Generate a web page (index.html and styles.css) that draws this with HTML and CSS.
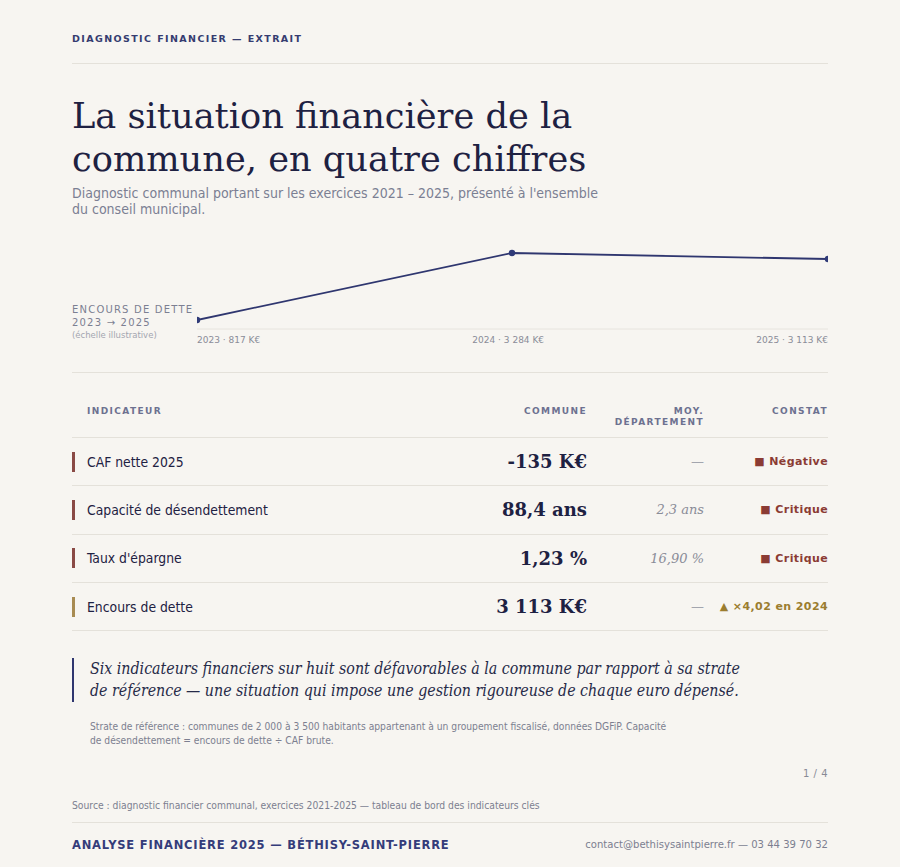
FILE: index.html
```html
<!DOCTYPE html>
<html lang="fr">
<head>
<meta charset="utf-8">
<title>Diagnostic financier</title>
<link rel="stylesheet" href="styles.css">
</head>
<body>
<div class="page">
  <header class="eyebrow">DIAGNOSTIC FINANCIER — EXTRAIT</header>
  <hr class="rule">
  <h1 class="title">La situation financière de la commune, en quatre chiffres</h1>
  <p class="subtitle">Diagnostic communal portant sur les exercices 2021 – 2025, présenté à l'ensemble du conseil municipal.</p>

  <section class="chart">
    <div class="chart-label">
      <div class="chart-name">ENCOURS DE DETTE<br>2023 → 2025</div>
      <div class="chart-note">(échelle illustrative)</div>
    </div>
    <div class="chart-plot">
      <svg class="chart-svg" viewBox="0 0 631 88" width="631" height="88">
        <line x1="0" y1="85" x2="631" y2="85" stroke="#e7e4de" stroke-width="1"/>
        <polyline points="0,76 315,9 631,15" fill="none" stroke="#2f366f" stroke-width="1.8"/>
        <circle cx="0" cy="76" r="3.2" fill="#2f3a78"/>
        <circle cx="315" cy="9" r="3.2" fill="#2f3a78"/>
        <circle cx="631" cy="15" r="3.2" fill="#2f3a78"/>
      </svg>
      <div class="chart-ticks">
        <span>2023 · 817 K€</span>
        <span>2024 · 3 284 K€</span>
        <span>2025 · 3 113 K€</span>
      </div>
    </div>
  </section>

  <hr class="rule rule-chart">

  <div class="table">
    <div class="row head">
      <div class="h-ind">INDICATEUR</div>
      <div class="c-com">COMMUNE</div>
      <div class="c-moy">MOY.<br>DÉPARTEMENT</div>
      <div class="c-con">CONSTAT</div>
    </div>
    <div class="row">
      <div class="c-ind"><span class="bar red"></span>CAF nette 2025</div>
      <div class="c-com val">-135 K€</div>
      <div class="c-moy dash">—</div>
      <div class="c-con tag red-t">■ Négative</div>
    </div>
    <div class="row">
      <div class="c-ind"><span class="bar red"></span>Capacité de désendettement</div>
      <div class="c-com val">88,4 ans</div>
      <div class="c-moy avg">2,3 ans</div>
      <div class="c-con tag red-t">■ Critique</div>
    </div>
    <div class="row">
      <div class="c-ind"><span class="bar red"></span>Taux d'épargne</div>
      <div class="c-com val">1,23 %</div>
      <div class="c-moy avg">16,90 %</div>
      <div class="c-con tag red-t">■ Critique</div>
    </div>
    <div class="row">
      <div class="c-ind"><span class="bar gold"></span>Encours de dette</div>
      <div class="c-com val">3 113 K€</div>
      <div class="c-moy dash">—</div>
      <div class="c-con tag gold-t">▲ ×4,02 en 2024</div>
    </div>
  </div>

  <blockquote class="quote">Six indicateurs financiers sur huit sont défavorables à la commune par rapport à sa strate de référence — une situation qui impose une gestion rigoureuse de chaque euro dépensé.</blockquote>

  <p class="note">Strate de référence : communes de 2 000 à 3 500 habitants appartenant à un groupement fiscalisé, données DGFiP. Capacité de désendettement = encours de dette ÷ CAF brute.</p>

  <div class="pager">1 / 4</div>

  <p class="source">Source : diagnostic financier communal, exercices 2021-2025 — tableau de bord des indicateurs clés</p>
  <hr class="rule rule-foot">
  <footer class="footer">
    <span class="foot-title">ANALYSE FINANCIÈRE 2025 — BÉTHISY-SAINT-PIERRE</span>
    <span class="foot-contact">contact@bethisysaintpierre.fr — 03 44 39 70 32</span>
  </footer>
</div>
</body>
</html>
```

FILE: styles.css
```css
html, body {
  margin: 0;
  padding: 0;
  background: #f7f5f1;
}
body {
  font-family: "DejaVu Sans", sans-serif;
  color: #1e2142;
}
.page {
  width: 756px;
  margin: 0 auto;
  padding-top: 33px;
}
.eyebrow {
  font-size: 9.5px;
  font-weight: bold;
  letter-spacing: 1.4px;
  color: #353c70;
  line-height: 12px;
}
.rule {
  border: 0;
  border-top: 1px solid #e4e1da;
  margin: 18px 0 0;
}
.title {
  font-family: "DejaVu Serif", serif;
  font-weight: normal;
  font-size: 35.2px;
  line-height: 43px;
  margin: 30px 0 0;
  width: 560px;
  color: #1e2142;
}
.subtitle {
  font-size: 14px;
  line-height: 16px;
  color: #7b7f93;
  margin: 5px 0 0;
  width: 535px;
  font-stretch: condensed;
}
.chart {
  display: flex;
  align-items: flex-end;
  margin-top: 27px;
}
.chart-label {
  width: 125px;
  flex: none;
  padding-bottom: 5px;
}
.chart-name {
  font-size: 10px;
  letter-spacing: 1.2px;
  line-height: 12.5px;
  color: #7c7f92;
}
.chart-note {
  font-size: 8.5px;
  color: #a3a5b0;
  line-height: 12px;
}
.chart-plot {
  flex: 1;
}
.chart-svg {
  display: block;
  overflow: hidden;
}
.chart-ticks {
  display: flex;
  justify-content: space-between;
  font-size: 9px;
  color: #8a8c98;
  margin-top: 2px;
  line-height: 12px;
}
.rule-chart {
  margin-top: 26px;
}
.table {
  margin-top: 33px;
}
.row {
  display: grid;
  grid-template-columns: 1fr 140px 117px 124px;
  align-items: center;
  border-bottom: 1px solid #e4e1da;
  height: 47.3px;
}
.row.head {
  align-items: start;
  height: auto;
  padding: 0 0 9px;
  font-size: 9px;
  font-weight: bold;
  letter-spacing: 1.4px;
  color: #6d7190;
  line-height: 11px;
}
.h-ind {
  padding-left: 15px;
}
.c-com, .c-moy, .c-con {
  text-align: right;
}
.c-ind {
  display: flex;
  align-items: center;
  font-size: 13.8px;
  font-stretch: condensed;
  color: #1e2142;
}
.bar {
  width: 3px;
  height: 20px;
  margin-right: 12px;
}
.bar.red { background: #8a4a45; }
.bar.gold { background: #a88b52; }
.val {
  font-family: "DejaVu Serif", serif;
  font-weight: bold;
  font-size: 18px;
  color: #1e2142;
}
.avg {
  font-family: "DejaVu Serif", serif;
  font-style: italic;
  font-size: 13px;
  color: #8a8c98;
}
.dash {
  color: #a3a5ae;
  font-size: 13px;
}
.tag {
  font-size: 11px;
  font-weight: bold;
  letter-spacing: 0.4px;
}
.red-t { color: #8b3b34; }
.gold-t { color: #9b7d2f; }
.quote {
  margin: 27px 0 0;
  border-left: 2px solid #2f366f;
  padding: 0 0 0 16px;
  width: 665px;
  font-family: "DejaVu Serif", serif;
  font-style: italic;
  font-stretch: condensed;
  font-size: 15.8px;
  line-height: 22px;
  color: #262a48;
}
.note {
  margin: 18px 0 0;
  padding-left: 18px;
  font-size: 10.2px;
  line-height: 14px;
  color: #7c7f90;
  width: 580px;
  font-stretch: condensed;
}
.pager {
  text-align: right;
  font-size: 10px;
  letter-spacing: 0.5px;
  color: #888a96;
  margin-top: 19px;
  line-height: 14px;
}
.source {
  margin: 17px 0 0;
  font-size: 10.25px;
  line-height: 14px;
  color: #7c7f90;
  font-stretch: condensed;
}
.rule-foot {
  margin-top: 10px;
}
.footer {
  display: flex;
  justify-content: space-between;
  align-items: center;
  margin-top: 14px;
  line-height: 16px;
}
.foot-title {
  font-size: 11.5px;
  font-weight: bold;
  letter-spacing: 0.8px;
  color: #343c7a;
}
.foot-contact {
  font-size: 11.2px;
  color: #7c7f90;
  font-stretch: condensed;
}
```
